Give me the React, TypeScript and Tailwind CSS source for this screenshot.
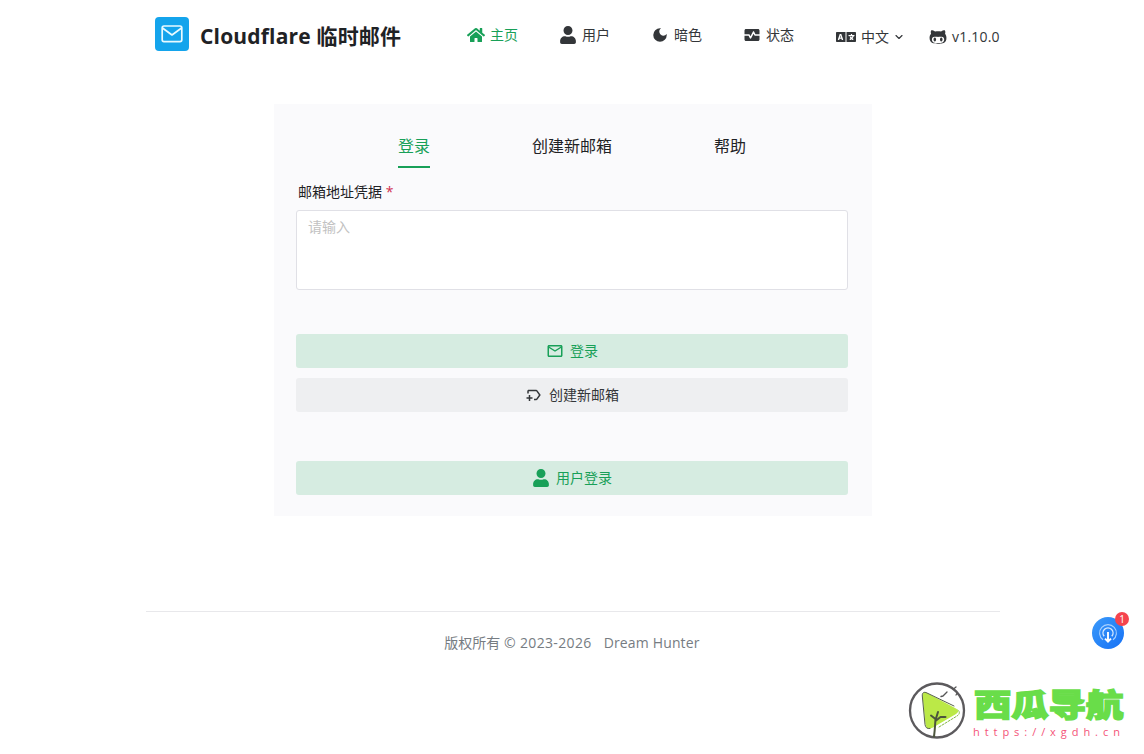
import type { ReactNode } from "react";
import { FaHome, FaUser, FaLanguage, FaGithubAlt } from "react-icons/fa";
import { MdDarkMode, MdMonitorHeart, MdOutlineEmail, MdOutlineNewLabel } from "react-icons/md";
import { ChevronDown } from "lucide-react";

function NavItem({ icon, children, className = "" }: { icon: ReactNode; children: ReactNode; className?: string }) {
  return (
    <a className={`flex h-[22px] shrink-0 items-center whitespace-nowrap text-sm leading-[22px] ${className}`}>
      {icon}
      {children}
    </a>
  );
}

function Header() {
  return (
    <header className="flex h-[70px] items-start pl-[155px]">
      <div className="mt-[17px] flex h-[34px] w-[34px] shrink-0 items-center justify-center rounded bg-[#14a4ec]">
        <svg width="22" height="20" viewBox="0 0 22 20" fill="none" stroke="#e9faff" strokeWidth="1.7" strokeLinejoin="round" strokeLinecap="round">
          <rect x="1.2" y="2" width="19.6" height="15.6" rx="1.8" />
          <path d="M1.8 4.2 11 11l9.2-6.8" />
        </svg>
      </div>
      <h1 className="ml-[11px] mt-[20px] w-[267px] shrink-0 whitespace-nowrap text-[21px] font-bold leading-8 tracking-[0.18px] text-[#1f2225]">
        Cloudflare 临时邮件
      </h1>
      <nav className="mt-6 flex text-[#333639]">
        <NavItem className="w-[92px] gap-[5px] text-[#18a058]" icon={<FaHome size={18} />}>主页</NavItem>
        <NavItem className="w-[92px] gap-[5px]" icon={<FaUser size={18} />}>用户</NavItem>
        <NavItem className="w-[92px] gap-[5px]" icon={<MdDarkMode size={18} />}>暗色</NavItem>
        <NavItem className="w-[93px] gap-[5px]" icon={<MdMonitorHeart size={18} />}>状态</NavItem>
        <NavItem className="mt-0.5 w-[93px] gap-[5px]" icon={<FaLanguage size={20} />}>
          中文
          <ChevronDown size={12} className="-ml-px" strokeWidth={2.3} />
        </NavItem>
        <NavItem className="mt-0.5 gap-[5px]" icon={<FaGithubAlt size={18} />}>
          <span className="tracking-[0.2px]">v1.10.0</span>
        </NavItem>
      </nav>
    </header>
  );
}

function LoginCard() {
  const button = "flex h-[34px] w-full items-center justify-center text-sm";
  return (
    <main className="ml-[274px] mt-[34px] h-[412px] w-[598px] bg-[#fafafc] pl-[22px] pr-6 pt-[30px]">
      <div className="flex h-[34px] justify-around px-[51px] text-base leading-[25px] text-[#1f2225]">
        <button className="h-[34px] border-b-2 border-[#18a058] pb-[7px] text-[#18a058]">登录</button>
        <button className="h-[34px] pb-[9px]">创建新邮箱</button>
        <button className="h-[34px] pb-[9px]">帮助</button>
      </div>
      <label className="mt-[12px] block h-[24px] pl-0.5 text-sm leading-6 text-[#1f2225]">
        邮箱地址凭据 <span className="text-[#d03050]">*</span>
      </label>
      <textarea
        placeholder="请输入"
        className="mt-1.5 block h-20 w-full resize-none rounded-[3px] border border-[#e0e0e6] bg-white px-[11px] py-[5px] text-sm leading-[22px] outline-none placeholder:text-[#c2c2c2]"
      />
      <button className={`${button} mt-11 gap-1.5 rounded-[3px] bg-[#d6ece1] text-[#18a058]`}>
        <MdOutlineEmail size={18} />登录
      </button>
      <button className={`${button} mt-2.5 gap-1.5 rounded-[3px] bg-[#eeeff1] text-[#333639]`}>
        <MdOutlineNewLabel size={18} />创建新邮箱
      </button>
      <button className={`${button} mt-[49px] gap-1.5 rounded-[3px] bg-[#d6ece1] text-[#18a058]`}>
        <FaUser size={18} />用户登录
      </button>
    </main>
  );
}

function FloatingHelper() {
  return (
    <button className="absolute left-[1092px] top-[611px] h-[39px] w-[38px]">
      <svg width="38" height="39" viewBox="0 0 38 39" fill="none">
        <defs>
          <linearGradient id="helper" x1="0" y1="0" x2="1" y2="1">
            <stop stopColor="#3b9afa" />
            <stop offset="1" stopColor="#1671f5" />
          </linearGradient>
        </defs>
        <circle cx="16" cy="22" r="16" fill="url(#helper)" />
        <path d="M11 28.8a8.4 8.4 0 1 1 10 0" stroke="#a8d1ff" strokeWidth="1.1" />
        <path d="M12.2 25.2a5 5 0 1 1 7.6 0" stroke="#d6eaff" strokeWidth="1.4" />
        <path d="M16 21v9m-3-2.4 3 3 3-3" stroke="white" strokeWidth="1.9" />
        <circle cx="30" cy="8" r="7" fill="#f5444d" />
      </svg>
      <span className="absolute left-[23px] top-[2px] w-3.5 text-center text-[10px] leading-3 text-white">1</span>
    </button>
  );
}

function SiteBrand() {
  return (
    <div className="absolute left-[907px] top-[681px] flex">
      <svg width="60" height="60" viewBox="0 0 60 60" fill="none" strokeLinecap="round" strokeLinejoin="round">
        <circle cx="30" cy="29.5" r="27" fill="white" stroke="#5c5a5d" strokeWidth="2.3" />
        <path d="M21 12.500 48 27c4 2 4 4 1 6L26 46.500c-4 2-7 1.500-7.500-3L15.500 15c0-4 2-4.500 5.500-2.500Z" fill="#bbe947" />
        <path d="M47 25 20 12c-3-1.500-5-.5-4.700 3L18 43.500c.4 3 2 4.500 5 4" stroke="#56614b" strokeWidth="1" />
        <path d="m32 46 18-11c3-2 3-4 1-6" stroke="#84b743" strokeWidth="1" strokeDasharray="2 1.500" />
        <path d="M27 55.500c1-7 1-11 1.500-17.500L24 34.500M28.500 39l2.500-8M28.500 40l5-4h5" stroke="#4d553d" strokeWidth="2" />
        <path d="m34 15.500 2-.5 4-4m5-3.500 1.500.5L49 6m0 8 1-1.500" stroke="#555" strokeWidth="1.300" />
      </svg>
      <div className="ml-[7px] w-[155px]">
        <svg width="152" height="42" viewBox="0 0 152 42" className="block overflow-visible">
          <text x="0" y="34.500" textLength="149.500" lengthAdjust="spacingAndGlyphs" fontFamily="'Noto Sans CJK SC'" fontSize="31" fontWeight="900" fill="#69dd49" stroke="#69dd49" strokeWidth="1.4">
            西瓜导航
          </text>
        </svg>
        <p className="-ml-px mt-[2px] whitespace-nowrap text-[11px] font-medium leading-[14px] tracking-[4.950px] text-[#f45478]">https://xgdh.cn</p>
      </div>
    </div>
  );
}

export default function App() {
  return (
    <div className="relative h-[754px] w-[1144px] overflow-hidden bg-white font-['Open_Sans','Noto_Sans_CJK_SC',sans-serif]">
      <Header />
      <LoginCard />
      <footer className="ml-[146px] mt-[95px] flex w-[854px] justify-center border-t border-[#e8e8eb] pt-5 text-sm leading-[22px] text-[#767c82]">
        <span>版权所有 <span className="tracking-[0.35px]">© 2023-2026</span></span>
        <span className="ml-3 mr-0.5 tracking-[0.15px]">Dream Hunter</span>
      </footer>
      <FloatingHelper />
      <SiteBrand />
    </div>
  );
}
